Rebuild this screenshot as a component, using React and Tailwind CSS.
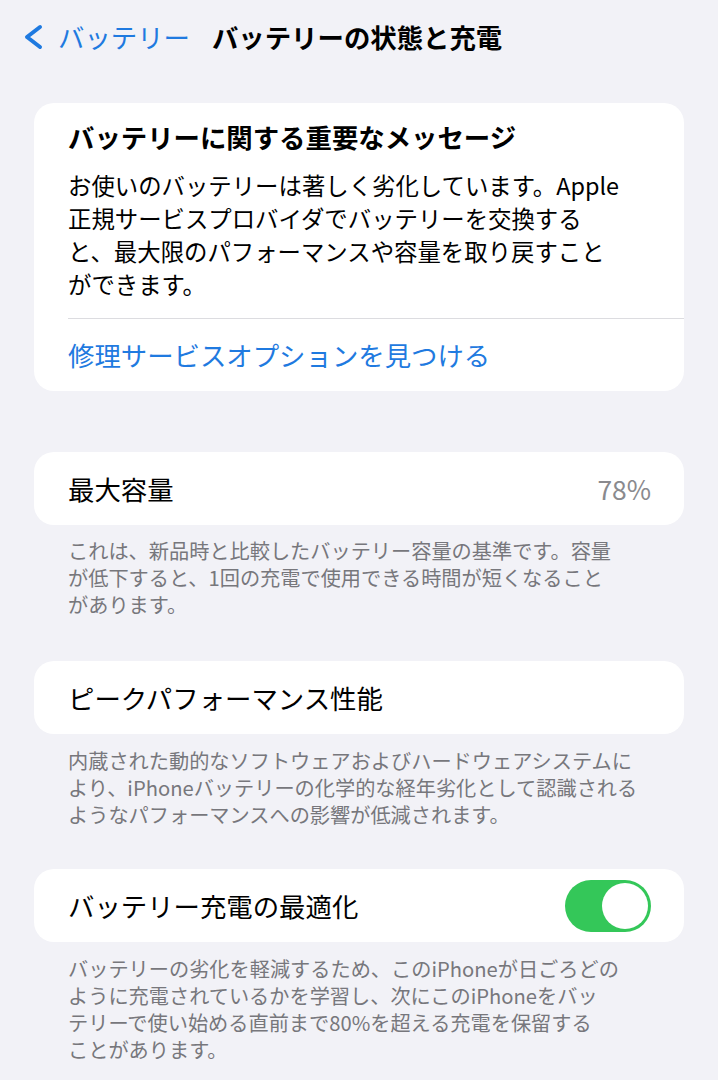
import React from 'react';

const font = { fontFamily: '"Noto Sans CJK JP", "Noto Sans", sans-serif' };

const Footer = ({ lines, className = '' }) => (
  <p className={`px-[68px] text-[20.2px] leading-[27px] text-[#77777c] whitespace-nowrap ${className}`}>
    {lines.map((l, i) => (
      <React.Fragment key={i}>
        {l}
        {i < lines.length - 1 && <br />}
      </React.Fragment>
    ))}
  </p>
);

const Row = ({ children, className = '' }) => (
  <div className={`mx-[34px] h-[73px] bg-white rounded-[20px] flex items-center justify-between pl-[34px] pr-[33px] ${className}`}>
    {children}
  </div>
);

const Toggle = () => (
  <div className="w-[86px] h-[52px] rounded-full bg-[#34c759] flex items-center justify-end p-[3px]">
    <div className="w-[46px] h-[46px] rounded-full bg-white" />
  </div>
);

export default function App() {
  return (
    <div className="w-[718px] h-[1080px] overflow-hidden bg-[#f2f2f7] text-black" style={font}>
      {/* nav bar */}
      <div className="h-[74px] flex items-center pl-[22px]">
        <svg width="22" height="26" viewBox="0 0 22 26" fill="none" className="shrink-0">
          <path d="M18 3 L5 13 L18 23" stroke="#1f7ae0" strokeWidth="4" strokeLinecap="round" strokeLinejoin="round" />
        </svg>
        <span className="ml-[14px] text-[26.4px] leading-none text-[#1f7ae0]">バッテリー</span>
        <span className="ml-[22px] text-[26.4px] leading-none font-bold">バッテリーの状態と充電</span>
      </div>

      {/* important message */}
      <div className="mx-[34px] mt-[29px] bg-white rounded-[20px] pt-[17px]">
        <div className="px-[34px]">
          <h2 className="text-[26.4px] leading-[34px] font-bold">バッテリーに関する重要なメッセージ</h2>
          <p className="mt-[15px] text-[23.4px] leading-[33px] whitespace-nowrap">
            お使いのバッテリーは著しく劣化しています。Apple
            <br />
            正規サービスプロバイダでバッテリーを交換する
            <br />
            と、最大限のパフォーマンスや容量を取り戻すこと
            <br />
            ができます。
          </p>
        </div>
        <div className="mt-[17px] ml-[34px] h-px bg-[#dcdce0]" />
        <div className="h-[72px] flex items-center pl-[34px]">
          <span className="text-[26.4px] text-[#1f7ae0]">修理サービスオプションを見つける</span>
        </div>
      </div>

      {/* max capacity */}
      <Row className="mt-[61px]">
        <span className="text-[26.4px]">最大容量</span>
        <span className="text-[26.4px] text-[#8a8a8e]">78%</span>
      </Row>
      <Footer
        className="mt-[12px]"
        lines={[
          'これは、新品時と比較したバッテリー容量の基準です。容量',
          'が低下すると、1回の充電で使用できる時間が短くなること',
          'があります。',
        ]}
      />

      {/* peak performance */}
      <Row className="mt-[43px]">
        <span className="text-[26.4px]">ピークパフォーマンス性能</span>
      </Row>
      <Footer
        className="mt-[13px]"
        lines={[
          '内蔵された動的なソフトウェアおよびハードウェアシステムに',
          'より、iPhoneバッテリーの化学的な経年劣化として認識される',
          'ようなパフォーマンスへの影響が低減されます。',
        ]}
      />

      {/* optimized charging */}
      <Row className="mt-[41px]">
        <span className="text-[26.4px]">バッテリー充電の最適化</span>
        <Toggle />
      </Row>
      <Footer
        className="mt-[13px]"
        lines={[
          'バッテリーの劣化を軽減するため、このiPhoneが日ごろどの',
          'ように充電されているかを学習し、次にこのiPhoneをバッ',
          'テリーで使い始める直前まで80%を超える充電を保留する',
          'ことがあります。',
        ]}
      />
    </div>
  );
}
